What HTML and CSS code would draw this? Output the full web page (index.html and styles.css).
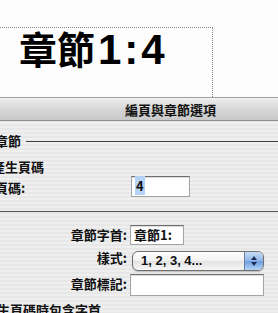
FILE: index.html
```html
<!DOCTYPE html>
<html>
  <head>
    <meta charset="UTF-8" />
    <meta name="viewport" content="width=device-width, initial-scale=1.0" />
    <title>編頁與章節選項</title>
    <link rel="stylesheet" href="styles.css">
  </head>

  <body>
    <div class="canvas">
      <div class="frame">
        <span class="big">章節<span class="num">1:4</span></span>
      </div>
    </div>

    <div class="dialog">
      <div class="titlebar">編頁與章節選項</div>
      <div class="panel">
        <div class="group-head">
          <span>章節</span>
          <div class="rule"></div>
        </div>
        <div class="sub">產生頁碼</div>
        <div class="row start">
          <span class="label">頁碼:</span>
          <div class="field num-field"><span class="sel">4</span></div>
        </div>
      </div>
      <div class="divider"></div>
      <div class="form">
        <span class="label">章節字首:</span>
        <div class="field prefix-field">章節1:</div>

        <span class="label">樣式:</span>
        <div class="popup">
          <span class="popup-text">1, 2, 3, 4...</span>
          <span class="popup-arrows">
            <svg width="8" height="12" viewBox="0 0 8 12">
              <path d="M4 1 L7 5 L1 5 Z" fill="#1d2d55"/>
              <path d="M4 11 L7 7 L1 7 Z" fill="#1d2d55"/>
            </svg>
          </span>
        </div>

        <span class="label">章節標記:</span>
        <div class="field marker-field"></div>
      </div>
      <div class="foot">生頁碼時包含字首</div>
    </div>
  </body>
</html>
```

FILE: styles.css
```css
* {
  padding: 0px;
  margin: 0px;
  box-sizing: border-box;
}

body {
  width: 278px;
  height: 313px;
  overflow: hidden;
  background: #fdfdfd;
  font-family: "Noto Sans CJK TC", "Liberation Sans", sans-serif;
  color: #111;
}

.canvas {
  height: 98px;
  background: #fdfdfd;
  border-bottom: 1px solid #9c9c9c;
  padding-top: 27px;
}

.frame {
  width: 213px;
  height: 70px;
  border-top: 1px dotted #888;
  border-right: 1px dotted #888;
  padding-left: 19px;
}

.big {
  display: block;
  font-size: 38px;
  line-height: 38px;
  margin-top: 1px;
  color: #000;
  font-weight: 700;
}

.big .num {
  font-family: "Liberation Sans", sans-serif;
  font-size: 42px;
  letter-spacing: 3px;
  margin-left: 3px;
}

.titlebar {
  height: 23px;
  background: linear-gradient(#ececec, #d6d6d6 50%, #c9c9c9);
  border-top: 1px solid #f4f4f4;
  border-bottom: 1px solid #8e8e8e;
  font-size: 13px;
  font-weight: 700;
  line-height: 21px;
  padding-left: 125px;
  color: #111;
}

.dialog {
  height: 215px;
  background: repeating-linear-gradient(#efefef 0px, #efefef 2px, #e7e7e7 2px, #e7e7e7 4px);
}

.panel {
  padding-top: 11px;
  margin-left: -5px;
}

.group-head {
  display: flex;
  align-items: center;
  height: 16px;
  font-size: 13px;
  font-weight: 700;
}

.group-head .rule {
  flex: 1;
  border-top: 1px solid #444;
  margin-left: 5px;
  margin-top: 2px;
}

.sub {
  margin-top: 11px;
  margin-left: -3px;
  height: 16px;
  line-height: 16px;
  font-size: 13px;
  font-weight: 700;
}

.row {
  display: flex;
  align-items: center;
}

.row.start {
  margin-top: 1px;
  height: 21px;
}

.label {
  font-size: 13px;
  font-weight: 700;
  line-height: 16px;
}

.row.start .label {
  width: 136px;
  margin-top: 2px;
}

.field {
  background: #fff;
  border: 1px solid #a4a4a4;
  border-top-color: #6e6e6e;
  box-shadow: inset 0 1px 1px rgba(0, 0, 0, 0.15);
  font-size: 13px;
  font-weight: 700;
  line-height: 16px;
  padding: 1px 3px;
}

.num-field {
  width: 59px;
  height: 21px;
}

.sel {
  background: #b5d3f7;
  padding: 0 1px;
}

.divider {
  margin-top: 14px;
  border-top: 1px solid #555;
}

.form {
  display: grid;
  grid-template-columns: 127px auto;
  align-items: center;
  column-gap: 3px;
  margin-top: 13px;
}

.form .label {
  text-align: right;
}

.prefix-field {
  width: 54px;
  height: 20px;
  padding-top: 1px;
  font-weight: 600;
}

.popup {
  margin-top: 6px;
  margin-left: 2px;
  width: 132px;
  height: 20px;
  display: flex;
  border: 1px solid #6f6f6f;
  border-radius: 6px;
  overflow: hidden;
  background: linear-gradient(#ffffff, #f1f1f1 50%, #e2e2e2 51%, #f6f6f6);
  box-shadow: 0 1px 1px rgba(0, 0, 0, 0.2);
}

.popup-text {
  flex: 1;
  font-size: 13px;
  font-weight: 700;
  line-height: 18px;
  padding-left: 8px;
  font-family: "Liberation Sans", sans-serif;
}

.popup-arrows {
  width: 19px;
  display: flex;
  align-items: center;
  justify-content: center;
  border-left: 1px solid #6b7fa6;
  background: linear-gradient(#c7dcf6, #8fb6ea 50%, #6a9ce0 51%, #b6d2f6);
}

.marker-field {
  margin-top: 3px;
  width: 134px;
  height: 22px;
}

.foot {
  margin-top: 6px;
  margin-left: -3px;
  font-size: 13px;
  font-weight: 700;
  line-height: 16px;
}
```
